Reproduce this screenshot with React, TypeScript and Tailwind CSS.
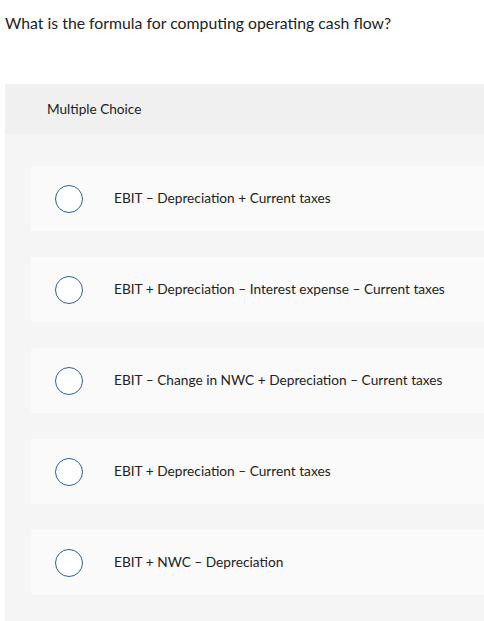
const choices = [
  'EBIT \u2013 Depreciation + Current taxes',
  'EBIT + Depreciation \u2013 Interest expense \u2013 Current taxes',
  'EBIT \u2013 Change in NWC + Depreciation \u2013 Current taxes',
  'EBIT + Depreciation \u2013 Current taxes',
  'EBIT + NWC \u2013 Depreciation',
];

export default function App() {
  return (
    <div className="min-h-[621px] bg-white text-[#222] font-['Lato',sans-serif]">
      <p className="px-[5px] pt-[12px] text-[15.8px] leading-[21px]">
        What is the formula for computing operating cash flow?
      </p>

      <div className="ml-[5px] mt-[51px] bg-[#f5f5f5] pb-[26px]">
        <div className="bg-[#f0f0f0] h-[50px] flex items-center pl-[42px] pt-[1px] text-[13.6px]">
          Multiple Choice
        </div>

        <div className="flex flex-col gap-[26px] pt-[32px] pl-[26px]">
          {choices.map((c) => (
            <div
              key={c}
              className="h-[65px] bg-[#fafafa] rounded-l-[3px] flex items-center"
            >
              <span className="ml-[24px] w-[28px] h-[28px] rounded-full border-[1.5px] border-[#2f6094] bg-white shrink-0" />
              <span className="ml-[31px] text-[13.7px] text-[#222]">{c}</span>
            </div>
          ))}
        </div>
      </div>
    </div>
  );
}
